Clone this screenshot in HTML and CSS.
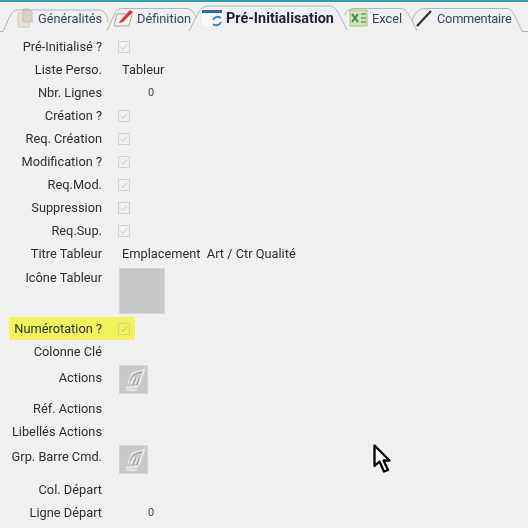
FILE: index.html
```html
<!DOCTYPE html>
<html lang="fr">
<head>
<meta charset="utf-8">
<title>Pré-Initialisation</title>
<link rel="stylesheet" href="styles.css">
</head>
<body>
<svg width="0" height="0" class="defs">
  <symbol id="check" viewBox="0 0 12 12"><path d="M2.5 6.2 5 8.8 9.6 3.2" fill="none" stroke="currentColor" stroke-width="1.1"/></symbol>
  <symbol id="hand" viewBox="0 0 27 27"><path d="M8 17 12 8c3-2 7-3 12-4l-3 9-2 6M11 18l3-7M15 18l3-7M19 18l1-5M6 21c5 1 9 1 12-1M6 23.500c4 1 8 1 11 0" fill="none" stroke="#ebebeb" stroke-width="1.700"/><path d="M9.500 15 13 9.500c3-2 6-3 9-3.500M13 19l3-7M17 19l2-7" fill="none" stroke="#8e8e8e" stroke-width=".9"/></symbol>
</svg>
<div class="app">
  <div class="topline"></div>
  <nav class="tabs">
    <div class="tab t1">
      <svg class="ticon" viewBox="0 0 16 20"><path d="M1 5h8l3 3v11H1z" fill="#e8e2d6" stroke="#cfc8ba"/><path d="M6 1h6l3 3v10H6z" fill="#d8d2c6" stroke="#c4bdb0"/></svg>
      <span>Généralités</span>
    </div>
    <div class="tab t2">
      <svg class="ticon" viewBox="0 0 20 18"><path d="M3 5h15l-3 12H0z" fill="#f6f3ea" stroke="#a8a597"/><path d="M6 12 16 1l3 2-10 10-4 1z" fill="#e03038"/></svg>
      <span>Définition</span>
    </div>
    <div class="tab t3">
      <svg class="ticon" viewBox="0 0 20 18"><path d="M0 1h20v3H0z" fill="#2a6cb4"/><path d="M0 5h20v12H0z" fill="#fafafa"/><path d="M11 11a5 5 0 0 1 8-2M19 13a5 5 0 0 1-8 2" fill="none" stroke="#2a86d6" stroke-width="2"/></svg>
      <span>Pré-Initialisation</span>
    </div>
    <div class="tab t4">
      <svg class="ticon" viewBox="0 0 19 18"><path d="M1 1h17v16H1z" fill="#cfe3bc" stroke="#a5c48c"/><path d="M3 5l6 8M9 5l-6 8" stroke="#3f8a3a" stroke-width="2"/><path d="M12 5h5M12 9h5M12 13h5" stroke="#6aa35a" stroke-width="1.600"/></svg>
      <span>Excel</span>
    </div>
    <div class="tab t5">
      <svg class="ticon" viewBox="0 0 18 18"><path d="M1 17 15 2" stroke="#333" stroke-width="2.200"/></svg>
      <span>Commentaire</span>
    </div>
    <svg class="outline" viewBox="0 0 528 32" width="528" height="32">
      <path d="M0 29.500H3C8 20 10 8 18 8H100C104 8 108 14 108 20" />
      <path d="M107 29 114 13C116 8 118 6.500 124 6.500H186C191 6.500 194 10 196 15" />
      <path d="M189 29 199 10C201 6 204 4 210 4H329C336 4 338 10 347 28" />
      <path d="M345 13C347 8 350 6.500 355 6.500H400C406 6.500 408 10 417 29" />
      <path d="M412 20C414 11 418 6.500 426 6.500H507C512 6.500 514 12 522 29.500H528" />
    </svg>
  </nav>
  <main class="form">
    <div class="row"><label class="lbl">Pré-Initialisé ?</label><svg class="cb"><use href="#check"/></svg></div>
    <div class="row"><label class="lbl">Liste Perso.</label><span class="val">Tableur</span></div>
    <div class="row"><label class="lbl">Nbr. Lignes</label><span class="num">0</span></div>
    <div class="row"><label class="lbl">Création ?</label><svg class="cb"><use href="#check"/></svg></div>
    <div class="row"><label class="lbl">Req. Création</label><svg class="cb"><use href="#check"/></svg></div>
    <div class="row"><label class="lbl">Modification ?</label><svg class="cb"><use href="#check"/></svg></div>
    <div class="row"><label class="lbl">Req.Mod.</label><svg class="cb"><use href="#check"/></svg></div>
    <div class="row"><label class="lbl">Suppression</label><svg class="cb"><use href="#check"/></svg></div>
    <div class="row"><label class="lbl">Req.Sup.</label><svg class="cb"><use href="#check"/></svg></div>
    <div class="row"><label class="lbl">Titre Tableur</label><span class="val">Emplacement&nbsp; Art / Ctr Qualité</span></div>
    <div class="row top icon-row"><label class="lbl">Icône Tableur</label><div class="bigbox"></div></div>
    <div class="row mark"><label class="lbl">Numérotation ?</label><svg class="cb yellow"><use href="#check"/></svg></div>
    <div class="row"><label class="lbl">Colonne Clé</label></div>
    <div class="row top btn-row"><label class="lbl">Actions</label><div class="btn"><svg class="hand"><use href="#hand"/></svg></div></div>
    <div class="row"><label class="lbl">Réf. Actions</label></div>
    <div class="row"><label class="lbl">Libellés Actions</label></div>
    <div class="row top btn-row second"><label class="lbl">Grp. Barre Cmd.</label><div class="btn"><svg class="hand"><use href="#hand"/></svg></div></div>
    <div class="row"><label class="lbl">Col. Départ</label></div>
    <div class="row"><label class="lbl">Ligne Départ</label><span class="num">0</span></div>
  </main>
  <svg class="cursor" viewBox="0 0 20 30" width="20" height="30"><path d="M1.500 1.500V22L6.500 17.500 11 27.500 15 26 10.500 16.500H16.500Z" fill="#fff" stroke="#000" stroke-width="2.300" stroke-linejoin="round"/></svg>
</div>
</body>
</html>
```
FILE: styles.css
```css
html, body { margin: 0; padding: 0; }
body {
  width: 528px;
  height: 528px;
  overflow: hidden;
  background: #f0f0f0;
  font-family: Roboto, "Liberation Sans", Arial, sans-serif;
  font-size: 12.8px;
  color: #2e2e2e;
}
.defs { position: absolute; }
.app {
  position: relative;
  width: 528px;
  height: 528px;
  overflow: hidden;
  filter: blur(0.35px);
}
.topline { height: 2px; background: #2aa3ad; }
.tabs {
  position: relative;
  display: flex;
  height: 33px;
  box-sizing: border-box;
  padding-left: 17px;
  background: #f0f0f0;
}
.tab {
  flex: none;
  display: flex;
  align-items: center;
  height: 32px;
  color: #3a4660;
}
.ticon { flex: none; width: 18px; height: 18px; }
.t1 { width: 97px; gap: 5px; }
.t1 .ticon { width: 16px; height: 20px; }
.t2 { width: 88px; gap: 3px; }
.t2 .ticon { width: 20px; }
.t3 { width: 147px; gap: 4px; font-weight: bold; font-size: 14.4px; color: #1c2233; }
.t3 .ticon { width: 20px; }
.t4 { width: 67px; gap: 4px; }
.t4 .ticon { width: 19px; }
.t5 { gap: 3px; letter-spacing: -0.25px; }
.outline {
  position: absolute;
  left: 0;
  top: 0;
  fill: none;
  stroke: #b4b4b4;
  stroke-width: 1;
}
.form { display: flex; flex-direction: column; }
.row {
  display: flex;
  align-items: center;
  height: 23px;
  margin-left: 9px;
  flex: none;
}
.lbl {
  flex: none;
  width: 93px;
  text-align: right;
  white-space: nowrap;
}
.val { margin-left: 20px; white-space: nowrap; }
.num { margin-left: 46px; color: #5a3f33; font-size: 11px; }
.cb {
  flex: none;
  width: 12px;
  height: 12px;
  margin-left: 16px;
  box-sizing: border-box;
  border: 1px solid #d2d2d2;
  background: #f0f0f0;
  color: #c2c2c2;
}
.cb.yellow {
  background: #f3f368;
  border-color: #d8d86a;
  color: #c0c06a;
}
.top { align-items: flex-start; }
.top .lbl { margin-top: 2px; }
.icon-row { height: 52px; padding-top: 3px; box-sizing: border-box; }
.bigbox {
  width: 46px;
  height: 46px;
  margin-left: 17px;
  box-sizing: border-box;
  background: #c9c9c9;
  border: 1px solid #d6d6d6;
}
.mark { width: 126px; background: #f2f25c; }
.btn-row { height: 34px; padding-top: 2px; box-sizing: border-box; }
.btn-row .lbl { margin-top: 5px; }
.second { height: 35px; }
.btn-row.second .lbl { margin-top: 4px; }
.btn {
  width: 29px;
  height: 29px;
  margin-left: 17px;
  box-sizing: border-box;
  background: #c9c9c9;
  border: 1px solid #d4d4d4;
}
.hand { display: block; width: 27px; height: 27px; }
.cursor { position: absolute; left: 373px; top: 444px; }
```
